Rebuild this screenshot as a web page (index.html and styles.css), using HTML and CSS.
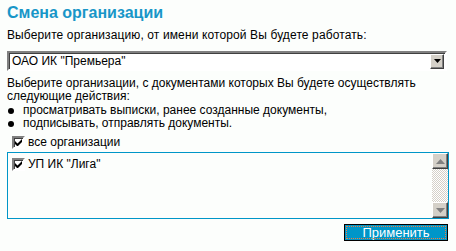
FILE: index.html
```html
<!DOCTYPE html>
<html lang="ru">
<head>
  <meta charset="UTF-8" />
  <title>Смена организации</title>
  <link rel="stylesheet" href="styles.css">
</head>
<body>
  <h1 class="title">Смена организации</h1>
  <p class="lead">Выберите организацию, от имени которой Вы будете работать:</p>
  <div class="select">
    <span class="select-value">ОАО ИК "Премьера"</span>
    <span class="btn3d drop">
      <svg width="7" height="4" viewBox="0 0 7 4"><path d="M0 0h7L3.5 4z" fill="#000"/></svg>
    </span>
  </div>
  <p class="info">Выберите организации, с документами которых Вы будете осуществлять следующие действия:</p>
  <ul class="rights">
    <li>просматривать выписки, ранее созданные документы,</li>
    <li>подписывать, отправлять документы.</li>
  </ul>
  <label class="check all"><span class="box"></span>все организации</label>
  <div class="listbox">
    <div class="items">
      <label class="check"><span class="box"></span>УП ИК "Лига"</label>
    </div>
    <div class="scroll">
      <span class="btn3d arrow">
        <svg width="9" height="5" viewBox="0 0 9 5"><path d="M4.5 0L9 5H0z" fill="#808080"/></svg>
      </span>
      <span class="track"></span>
      <span class="btn3d arrow">
        <svg width="9" height="5" viewBox="0 0 9 5"><path d="M0 0h9L4.5 5z" fill="#808080"/></svg>
      </span>
    </div>
  </div>
  <div class="footer">
    <button class="apply" type="button">Применить</button>
  </div>
</body>
</html>
```

FILE: styles.css
```css
body {
  margin: 0;
  padding: 3px 7px 0 7px;
  background-color: #fcfefc;
  color: #000;
  font-family: 'Liberation Sans', Arial, sans-serif;
  font-size: 12px;
  line-height: 13px;
}
.title {
  margin: 0;
  font-size: 16px;
  line-height: 19px;
  color: #1896c8;
  font-weight: bold;
}
.lead {
  margin: 7px 0 0 0;
  letter-spacing: 0.12px;
}
.select {
  display: flex;
  align-items: center;
  margin-top: 9px;
  width: 440px;
  height: 20px;
  box-sizing: border-box;
  border: 2px solid;
  border-color: #808080 #fff #fff #808080;
  box-shadow: inset 1px 1px 0 #404040;
  background: #fff;
  padding: 0 1px 0 3px;
}
.select-value {
  flex: 1;
}
.btn3d {
  display: flex;
  align-items: center;
  justify-content: center;
  box-sizing: border-box;
  background: #d4d0c8;
  border: 1px solid;
  border-color: #fff #404040 #404040 #fff;
  box-shadow: inset -1px -1px 0 #808080;
}
.drop {
  width: 14px;
  height: 15px;
}
.info {
  margin: 6px 0 0 0;
}
.rights {
  margin: 1px 0 0 0;
  padding: 0;
  list-style: none;
}
.rights li {
  position: relative;
  padding-left: 16px;
}
.rights li::before {
  content: "";
  position: absolute;
  left: 1px;
  top: 4px;
  width: 6px;
  height: 6px;
  border-radius: 50%;
  background: #000;
}
.check {
  display: flex;
  align-items: center;
  gap: 3px;
}
.box {
  width: 13px;
  height: 13px;
  box-sizing: border-box;
  border: 2px solid;
  border-color: #808080 #fff #fff #808080;
  box-shadow: inset 1px 1px 0 #404040;
  background: #fff url("data:image/svg+xml,%3Csvg xmlns='http://www.w3.org/2000/svg' width='7' height='7'%3E%3Cpath d='M0 2v3l2 2h1l4-4V0L2.5 4.5z' fill='%23000'/%3E%3C/svg%3E") no-repeat 1px 1px;
}
.all {
  margin: 6px 0 0 5px;
}
.listbox {
  display: flex;
  margin-top: 3px;
  width: 442px;
  height: 67px;
  box-sizing: border-box;
  border: 1px solid #0096c8;
  background: #fcfefc;
}
.items {
  flex: 1;
  padding: 5px 0 0 4px;
}
.scroll {
  display: flex;
  flex-direction: column;
  width: 16px;
}
.arrow {
  width: 16px;
  height: 16px;
}
.track {
  flex: 1;
  background: repeating-conic-gradient(#d4d0c8 0 25%, #fff 0 50%) 0 0 / 2px 2px;
}
.footer {
  display: flex;
  justify-content: flex-end;
  width: 441px;
  margin-top: 5px;
}
.apply {
  width: 104px;
  height: 17px;
  padding: 0;
  border: 1px solid #000;
  outline: 1px dotted #f08040;
  outline-offset: -3px;
  background: #0096c8;
  color: #fff;
  font-family: 'Liberation Sans', Arial, sans-serif;
  font-size: 13px;
  line-height: 13px;
}
```
